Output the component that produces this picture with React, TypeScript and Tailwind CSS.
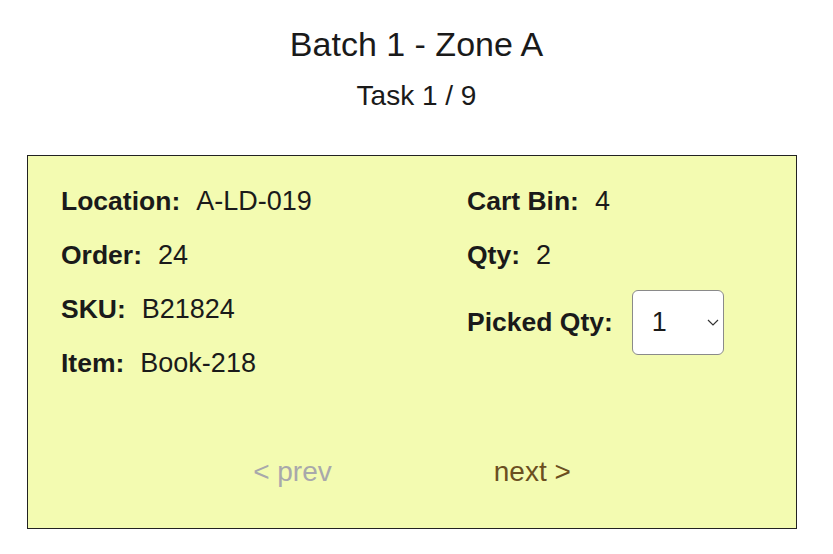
import React, { useState } from 'react';

function Field({ label, value }: { label: string; value: string }) {
  return (
    <div className="flex h-[54px] leading-[54px]">
      <span className="font-bold">{label}</span>
      <span className="ml-[16px] text-[27px]">{value}</span>
    </div>
  );
}

export default function App() {
  const [picked, setPicked] = useState('1');

  return (
    <div className="min-h-screen bg-white text-[#1a1a1a] font-['Liberation_Sans',Arial,sans-serif]">
      <div className="flex flex-col items-center pt-[24px]">
        <h1 className="text-[34px] leading-[40px]">Batch 1 - Zone A</h1>
        <h2 className="text-[28px] leading-[32px] mt-[16px]">Task 1 / 9</h2>
      </div>

      <div className="mx-[27px] mt-[43px] w-[770px] h-[374px] border border-[#222] bg-[#f3fbb1] pl-[33px] pt-[18px] text-[26.5px]">
        <div className="flex">
          <div className="w-[406px]">
            <Field label="Location:" value="A-LD-019" />
            <Field label="Order:" value="24" />
            <Field label="SKU:" value="B21824" />
            <Field label="Item:" value="Book-218" />
          </div>
          <div>
            <Field label="Cart Bin:" value="4" />
            <Field label="Qty:" value="2" />
            <div className="flex items-center mt-[8px]">
              <span className="font-bold">Picked Qty:</span>
              <div className="relative ml-[19px]">
                <select
                  value={picked}
                  onChange={(e) => setPicked(e.target.value)}
                  className="appearance-none block w-[92px] h-[65px] bg-white border border-[#8a8a8a] rounded-[6px] pl-[19px] text-[27px] text-[#1a1a1a] font-['Liberation_Sans',Arial,sans-serif]"
                >
                  <option value="0">0</option>
                  <option value="1">1</option>
                  <option value="2">2</option>
                </select>
                <svg className="absolute left-[75px] top-[29px] pointer-events-none" width="12" height="7" viewBox="0 0 12 7">
                  <path d="M1 1 L6 6 L11 1" fill="none" stroke="#333" strokeWidth="1.2" />
                </svg>
              </div>
            </div>
          </div>
        </div>

        <div className="flex justify-center gap-[162px] mt-[66px] pr-[33px] text-[28px] leading-[32px]">
          <button className="text-[#a8a8ab]">&lt; prev</button>
          <button className="text-[#6b4f1f]">next &gt;</button>
        </div>
      </div>
    </div>
  );
}
